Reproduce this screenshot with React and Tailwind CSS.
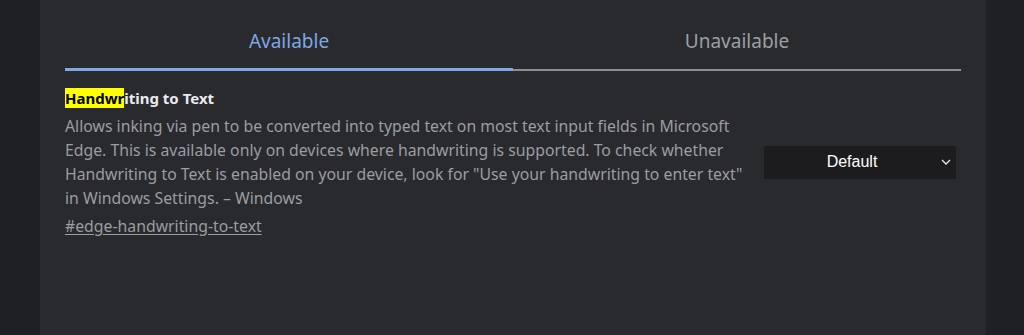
import React, { useState } from "react";

const flag = {
  title: "Handwriting to Text",
  match: "Handwr",
  description:
    'Allows inking via pen to be converted into typed text on most text input fields in Microsoft Edge. This is available only on devices where handwriting is supported. To check whether Handwriting to Text is enabled on your device, look for "Use your handwriting to enter text" in Windows Settings. – Windows',
  link: "#edge-handwriting-to-text",
};

const App = () => {
  const [tab, setTab] = useState("available");

  return (
    <div className="min-h-[335px] w-full bg-[#1f2023] flex" style={{ fontFamily: '"Noto Sans", "Open Sans", sans-serif' }}>
      <div className="ml-[40px] w-[946px] min-h-[335px] bg-[#292a2d] px-[25px]">
        {/* TABS */}
        <div className="flex w-[896px]">
          {[
            ["available", "Available"],
            ["unavailable", "Unavailable"],
          ].map(([key, label]) => (
            <button
              key={key}
              onClick={() => setTab(key)}
              className={`flex-1 h-[71px] pt-[27px] text-[19px] leading-[28px] flex flex-col justify-between items-center ${
                tab === key ? "text-[#7ea7e6]" : "text-[#9c9fa4]"
              }`}
            >
              <span>{label}</span>
              <span
                className={`w-full ${tab === key ? "h-[3px] bg-[#7ea7e6]" : "h-[2px] bg-[#8e8f92]"}`}
              />
            </button>
          ))}
        </div>

        {/* FLAG ROW */}
        <div className="flex items-center pt-[15px]">
          <div className="w-[690px]">
            <h3 className="text-[15px] font-bold text-[#e8eaed] leading-[24px]">
              <span className="bg-[#ffff00] text-black">{flag.match}</span>
              {flag.title.slice(flag.match.length)}
            </h3>
            <p className="mt-[4px] text-[15.8px] leading-[24px] text-[#9a9da2]">{flag.description}</p>
            <a href={flag.link} className="block mt-[4px] text-[15.8px] leading-[24px] text-[#9a9da2] underline underline-offset-2">
              {flag.link}
            </a>
          </div>
          <div className="ml-auto mr-[5px] mt-[0px] w-[192px] h-[33px] bg-[#1c1c1e] flex items-center relative pr-[16px]">
            <span className="flex-1 text-center text-white text-[16px]" style={{ fontFamily: '"Liberation Sans", Arial, sans-serif' }}>
              Default
            </span>
            <svg className="absolute right-[3px]" width="14" height="14" viewBox="0 0 14 14" fill="none" stroke="#e8eaed" strokeWidth="1.3">
              <path d="M3 5 L7 9 L11 5" />
            </svg>
          </div>
        </div>
      </div>
    </div>
  );
};

export default App;
